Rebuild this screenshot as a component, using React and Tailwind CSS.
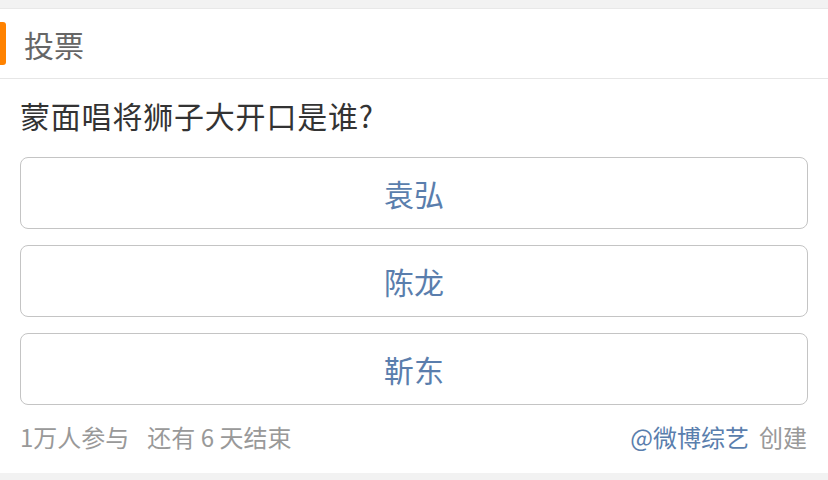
export default function App() {
  const font = { fontFamily: '"Noto Sans CJK SC", "Noto Sans", sans-serif' };
  const options = ["袁弘", "陈龙", "靳东"];
  return (
    <div className="w-[828px] h-[480px] bg-[#f2f2f2] pt-[8px] overflow-hidden" style={font}>
      <div className="bg-white h-[465px] border-t border-[#e8e8e8]">
        <div className="h-[70px] border-b border-[#e6e6e6] flex items-center">
          <div className="w-[6px] h-[43px] bg-[#ff8200] rounded-r-[3px]" />
          <span className="ml-[18px] text-[30px] leading-none text-[#666666]">投票</span>
        </div>
        <div className="pt-[17px] px-[20px] text-[30px] tracking-[0.8px] leading-[38px] text-[#333333]">蒙面唱将狮子大开口是谁?</div>
        <div className="mt-[23px] mx-[20px] flex flex-col gap-[16px]">
          {options.map((o) => (
            <div key={o} className="h-[72px] border border-[#c4c4c4] rounded-[8px] flex items-center justify-center text-[30px] text-[#5a7ead]">
              {o}
            </div>
          ))}
        </div>
        <div className="mt-[17px] ml-[20px] mr-[21px] flex items-center justify-between text-[24px] leading-[30px] text-[#999999]">
          <div className="flex gap-[18px]">
            <span>1万人参与</span>
            <span>还有 6 天结束</span>
          </div>
          <div>
            <span className="text-[#5a7ead]">@微博综艺</span>
            <span className="ml-[10px]">创建</span>
          </div>
        </div>
      </div>
    </div>
  );
}
